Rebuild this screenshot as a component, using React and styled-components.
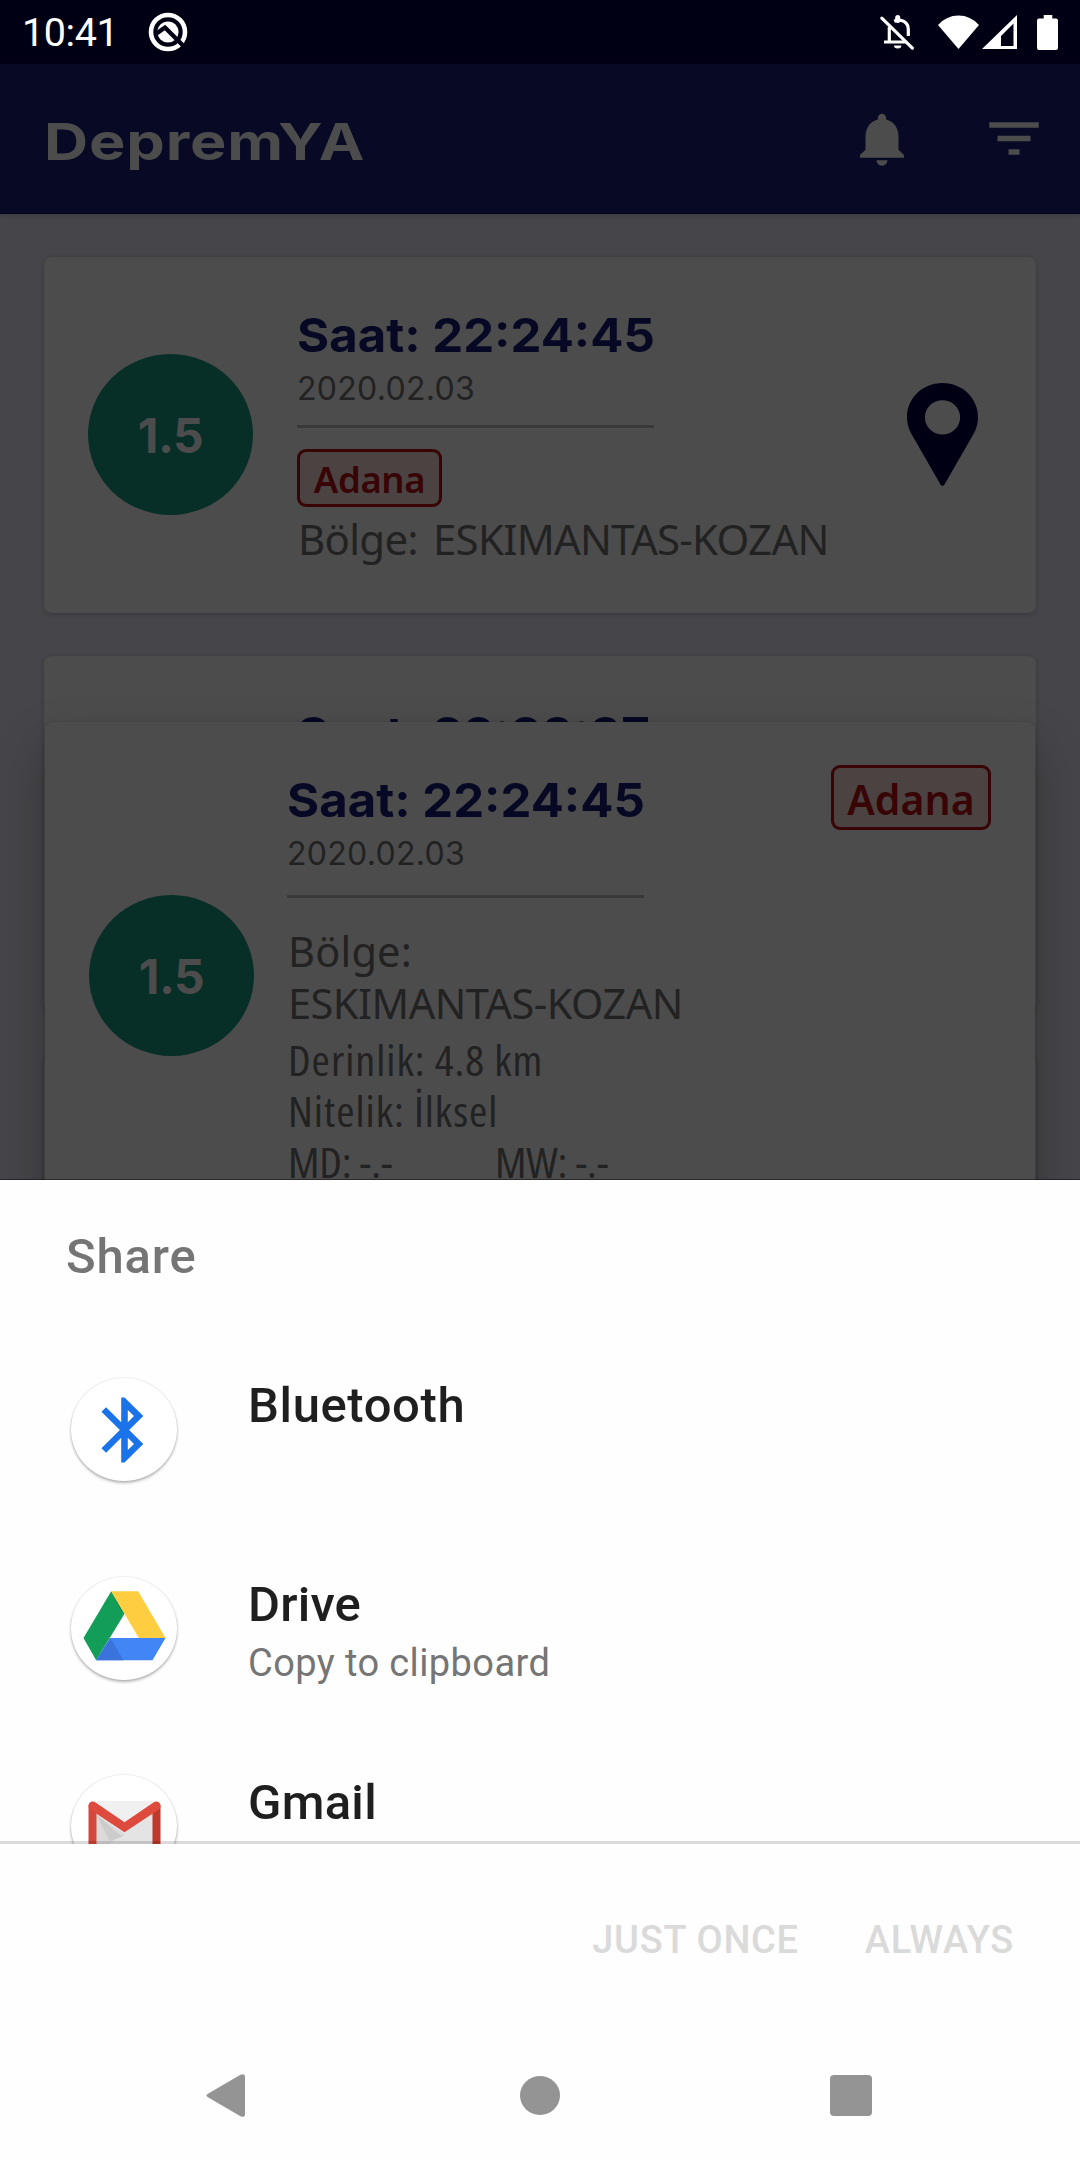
import React from 'react';
import styled, { createGlobalStyle } from 'styled-components';

const GlobalStyle = createGlobalStyle`
  * { box-sizing: border-box; }
  body { margin: 0; background: #fff; }
`;

const geometric = '"Inter", "Liberation Sans", sans-serif';
const humanist = '"Noto Sans", "Open Sans", sans-serif';

const Screen = styled.div`
  position: relative;
  display: flex;
  flex-direction: column;
  width: 1080px;
  height: 2160px;
  overflow: hidden;
  background: #464549;
  font-family: Roboto, sans-serif;
  svg { display: block; flex: none; }
`;

const StatusBar = styled.header`
  display: flex;
  align-items: center;
  flex: none;
  height: 64px;
  padding: 0 22px 0 22px;
  background: #000014;
  color: #fff;
`;

const Clock = styled.span`
  width: 126px;
  padding-top: 2px;
  font-size: 39.5px;
  line-height: 50px;
  letter-spacing: -0.4px;
`;

const StatusIcons = styled.div`
  display: flex;
  align-items: center;
  margin-left: auto;
`;

const Gap = styled.span`
  width: ${(p) => p.$w}px;
`;

const AppBar = styled.div`
  display: flex;
  align-items: center;
  flex: none;
  height: 150px;
  padding: 0 33px 0 44px;
  background: #080924;
  border-bottom: 1px solid #00001c;
  box-shadow: 0 2px 5px rgba(0, 0, 0, 0.15);
  color: #4c4c4c;
`;

const AppTitle = styled.h1`
  margin: 6px 0 0;
  font: 700 51px/64px ${geometric};
  letter-spacing: 0.7px;
  transform: scaleX(1.2);
  transform-origin: left;
`;

const AppActions = styled.div`
  display: flex;
  align-items: center;
  gap: 66px;
  margin-left: auto;
`;

const List = styled.main`
  display: flex;
  flex-direction: column;
  gap: 43px;
  padding: 43px 44px 0;
`;

const Card = styled.article`
  display: flex;
  align-items: center;
  flex: none;
  height: 356px;
  padding: 0 58px 2px 44px;
  border-radius: 8px;
  background: #4c4c4c;
  box-shadow: 0 1px 5px rgba(0, 0, 0, 0.22);
`;

const Magnitude = styled.div`
  display: flex;
  align-items: center;
  justify-content: center;
  flex: none;
  width: 165px;
  height: 161px;
  padding-top: 3px;
  border-radius: 50%;
  background: #082f27;
  color: #4c4c4c;
  font: 700 48px/56px ${geometric};
  letter-spacing: -0.6px;
`;

const Info = styled.div`
  display: flex;
  flex-direction: column;
  align-items: flex-start;
  align-self: flex-start;
  margin-left: ${(p) => p.$left}px;
  padding-top: 50px;
`;

const Time = styled.div`
  font: 700 47px/56px ${geometric};
  color: #070823;
  white-space: nowrap;
  transform: scaleX(1.045);
  transform-origin: left;
`;

const DateLine = styled.div`
  padding-top: 1px;
  font: 400 32px/50px ${geometric};
  letter-spacing: 0.3px;
  color: #222;
`;

const Divider = styled.div`
  width: 357px;
  height: 3px;
  margin: ${(p) => p.$before}px 0 ${(p) => p.$after}px;
  background: #393939;
`;

const Chip = styled.span`
  display: flex;
  align-items: center;
  justify-content: center;
  width: ${(p) => (p.$large ? 160 : 145)}px;
  height: ${(p) => (p.$large ? 65 : 58)}px;
  padding-top: 2px;
  border: 3px solid #380405;
  border-radius: 9px;
  background: #4a4341;
  color: #380405;
  font: 600 ${(p) => (p.$large ? 41 : 36.5)}px/50px ${humanist};
  letter-spacing: ${(p) => (p.$large ? 0 : -0.4)}px;
`;

const Region = styled.div`
  margin-top: ${(p) => p.$top || 0}px;
  padding-left: 1px;
  font: 400 ${(p) => p.$size}px/${(p) => p.$line}px ${humanist};
  letter-spacing: ${(p) => p.$spacing}px;
  word-spacing: 5px;
  color: #222;
  white-space: nowrap;
`;

const Details = styled.div`
  margin: 6px 0 0 1px;
  transform: scaleX(1.08);
  transform-origin: left;
`;

const Detail = styled.div`
  display: flex;
  height: 51px;
  font: 400 41px/51px "Open Sans", sans-serif;
  font-stretch: 75%;
  letter-spacing: 0.9px;
  color: #222;
  white-space: nowrap;
`;

const DetailCell = styled.span`
  width: 191.7px;
  letter-spacing: -0.2px;
`;

const PinSlot = styled.div`
  margin-left: auto;
`;

const Modal = styled.section`
  position: absolute;
  left: 45px;
  top: 722px;
  display: flex;
  align-items: center;
  width: 990px;
  height: 507px;
  padding: 0 44px;
  border-radius: 8px;
  background: #4c4c4c;
  box-shadow: 0 0 3px rgba(0, 0, 0, 0.15), 0 24px 48px rgba(0, 0, 0, 0.26);
`;

const ChipCorner = styled.div`
  align-self: flex-start;
  margin: 43px 0 0 auto;
`;

const Sheet = styled.section`
  position: absolute;
  left: 0;
  top: 1180px;
  display: flex;
  flex-direction: column;
  width: 1080px;
  height: 980px;
  background: #fefefe;
  box-shadow: 0 -1px 0 rgba(0, 0, 0, 0.45);
`;

const SheetTitle = styled.h2`
  flex: none;
  height: 150px;
  margin: 0;
  padding: 47px 0 0 66px;
  font: 500 49px/60px Roboto, sans-serif;
  letter-spacing: 0.8px;
  color: #757575;
`;

const Targets = styled.div`
  flex: none;
  height: 514px;
  overflow: hidden;
`;

const Target = styled.div`
  display: flex;
  height: 198.5px;
  padding: 48px 0 0 71px;
`;

const AppIcon = styled.div`
  display: flex;
  align-items: center;
  justify-content: center;
  flex: none;
  width: 106px;
  height: 103px;
  border-radius: 50%;
  background: #fff;
  box-shadow: 0 0 1px 1px rgba(0, 0, 0, 0.05), 0 2px 3px rgba(0, 0, 0, 0.28);
`;

const TargetText = styled.div`
  margin: -2px 0 0 71px;
`;

const TargetName = styled.div`
  font: 500 49px/60px Roboto, sans-serif;
  letter-spacing: ${(p) => p.$spacing}px;
  color: #1f1f1f;
`;

const TargetNote = styled.div`
  margin-top: 4px;
  font: 400 38px/48px Roboto, sans-serif;
  letter-spacing: 0.4px;
  color: #757575;
`;

const Buttons = styled.div`
  display: flex;
  justify-content: flex-end;
  gap: 66px;
  flex: none;
  height: 184px;
  margin-top: -3px;
  padding: 71px 66px 0 0;
  border-top: 3px solid rgba(0, 0, 0, 0.14);
`;

const TextButton = styled.button`
  height: 50px;
  padding: 0;
  border: 0;
  background: none;
  font: 500 38px/50px Roboto, sans-serif;
  letter-spacing: 0.7px;
  color: #dadada;
`;

const NavBar = styled.nav`
  display: flex;
  justify-content: space-between;
  align-items: center;
  flex: none;
  height: 136px;
  padding: 4px 208px 0 206px;
`;

const HomeButton = styled.div`
  padding-left: 5px;
`;

function QIcon() {
  return (
    <svg width="40" height="40" viewBox="0 0 40 40" fill="none">
      <circle cx="20" cy="20" r="17" stroke="#fff" strokeWidth="4.6" />
      <circle cx="20" cy="20" r="10.6" fill="#fff" />
      <path d="M8.500 21.500l8.500-6L36 34.500" stroke="#000014" strokeWidth="4.4" />
    </svg>
  );
}

function MutedIcon() {
  return (
    <svg width="40" height="38" viewBox="0 0 40 38" fill="none" stroke="#fff" strokeWidth="3.2">
      <path d="M17.200 8.200c7-3.200 14.100 1 14.100 8V23" />
      <path d="M20.700 4.500v3" strokeWidth="5" strokeLinecap="round" />
      <path d="M6.500 3l31 30.200" stroke="#000014" strokeWidth="4" />
      <path d="M4.800 5.200l30.600 29.900" strokeLinecap="round" />
      <path d="M17 32.600h7.400a3.700 3 0 0 1-7.400 0z" fill="#fff" stroke="none" />
      <path d="M12.300 14v15M7 29h22" />
    </svg>
  );
}

function WifiIcon() {
  return (
    <svg width="41" height="34" viewBox="0 0 41 34">
      <path d="M20.500 34L0 10Q8.500 0.500 20.500 0.500T41 10z" fill="#fff" />
    </svg>
  );
}

function SignalIcon() {
  return (
    <svg width="35" height="34" viewBox="0 0 35 34">
      <path fillRule="evenodd" d="M0 34L35 0v34zM19 21v10h12.500V8.500z" fill="#fff" />
    </svg>
  );
}

function BatteryIcon() {
  return (
    <svg width="21" height="35" viewBox="0 0 21 35">
      <path d="M6.700 0h8.600v3.500H19a2 2 0 0 1 2 2V33a2 2 0 0 1-2 2H2a2 2 0 0 1-2-2V5.500a2 2 0 0 1 2-2h4.700z" fill="#fff" />
    </svg>
  );
}

function BellIcon() {
  return (
    <svg width="66" height="64" viewBox="0 0 24 24" preserveAspectRatio="none" fill="currentColor">
      <path d="M12 22c1.100 0 2-.9 2-2h-4c0 1.100.89 2 2 2zm6-6v-5c0-3.070-1.640-5.640-4.500-6.320V4c0-.83-.67-1.500-1.500-1.500s-1.500.67-1.500 1.500v.68C7.630 5.360 6 7.920 6 11v5l-2 2v1h16v-1l-2-2z" />
    </svg>
  );
}

function FilterIcon() {
  return (
    <svg width="66" height="65" viewBox="0 0 24 24" preserveAspectRatio="none" fill="currentColor">
      <path d="M10 18h4v-2h-4v2zM3 6v2h18V6H3zm3 7h12v-2H6v2z" />
    </svg>
  );
}

function PinIcon() {
  return (
    <svg width="71" height="103" viewBox="0 0 71 103">
      <path
        fillRule="evenodd"
        d="M35.500 0C55.500 0 71 15.300 71 34.300c0 6.200-1.500 11.200-4.200 16.200L37.500 101.500c-1 1.800-3 1.800-4 0L4.200 50.500C1.500 45.500 0 40.500 0 34.300 0 15.300 15.500 0 35.500 0zm0 17.200a17.600 17.200 0 1 0 0 34.400a17.600 17.200 0 1 0 0-34.400z"
        fill="#000014"
      />
    </svg>
  );
}

function BluetoothIcon() {
  return (
    <svg width="79" height="78" viewBox="0 0 24 24" preserveAspectRatio="none" fill="#1a73e8">
      <path d="M17.710 7.710L12 2h-1v7.590L6.410 5 5 6.410 10.590 12 5 17.590 6.410 19 11 14.410V22h1l5.710-5.710-4.300-4.290 4.300-4.290zM13 5.830l1.880 1.880L13 9.590V5.830zm1.880 10.460L13 18.170v-3.760l1.880 1.880z" />
    </svg>
  );
}

function DriveIcon() {
  return (
    <svg width="107" height="104" viewBox="32 47 320 312">
      <path d="M152 93l40 67-85 140-38-67z" fill="#129d59" />
      <path d="M152 93l40 67-10-9z" fill="#0b6e3e" opacity=".5" />
      <path d="M152 93h81l82 140h-80z" fill="#ffcd40" />
      <path d="M149 233h166l-39 67H107z" fill="#4285f4" />
      <path d="M149 233l40 67h-82z" fill="#3a73dc" />
    </svg>
  );
}

function GmailIcon() {
  return (
    <svg width="107" height="104" viewBox="32 643 320 312">
      <path d="M94 722h196v156H94z" fill="#e4e4e4" />
      <path d="M94 722h196l-98 68z" fill="#f0f0f0" />
      <path d="M108 762l84 62-44 18z" fill="#d2d2d2" />
      <path d="M108 762l80 58-48 34-32 20z" fill="#dadada" />
      <path d="M108 762l76 66-36 14z" fill="#cccccc" />
      <path d="M84 734h24v144H94a10 10 0 0 1-10-10z" fill="#d5473a" />
      <path d="M276 734h24v134a10 10 0 0 1-10 10h-14z" fill="#c0392b" />
      <path d="M84 735c0-10 10-16 20-10l88 60 88-60c10-6 20 0 20 10 0 5-2 9-6 12l-102 68-102-68c-4-3-6-7-6-12z" fill="#de4a3d" />
    </svg>
  );
}

function BackIcon() {
  return (
    <svg width="39" height="43" viewBox="0 0 39 43">
      <path d="M1.500 20L34.500.7Q39-1 39 3v37q0 4-4.500 2.300L1.500 23q-2-1.500 0-3z" fill="#949494" />
    </svg>
  );
}

function HomeIcon() {
  return (
    <svg width="40" height="39" viewBox="0 0 40 39">
      <ellipse cx="20" cy="19.500" rx="20" ry="19.500" fill="#949494" />
    </svg>
  );
}

function RecentsIcon() {
  return (
    <svg width="42" height="41" viewBox="0 0 42 41">
      <rect width="42" height="41" rx="4" fill="#949494" />
    </svg>
  );
}

function QuakeCard({ time, date, city, region, magnitude }) {
  return (
    <Card>
      <Magnitude>{magnitude}</Magnitude>
      <Info $left={44}>
        <Time>Saat: {time}</Time>
        <DateLine>{date}</DateLine>
        <Divider $before={11} $after={21} />
        <Chip>{city}</Chip>
        <Region $size={42} $line={56} $spacing={-0.75} $top={4}>Bölge: {region}</Region>
      </Info>
      <PinSlot><PinIcon /></PinSlot>
    </Card>
  );
}

const targets = [
  { name: 'Bluetooth', spacing: 0.6, icon: <BluetoothIcon /> },
  { name: 'Drive', spacing: 0.2, note: 'Copy to clipboard', icon: <DriveIcon /> },
  { name: 'Gmail', spacing: 0.3, icon: <GmailIcon /> },
];

export default function App() {
  return (
    <Screen>
      <GlobalStyle />
      <StatusBar>
        <Clock>10:41</Clock>
        <QIcon />
        <StatusIcons>
          <MutedIcon />
          <Gap $w={21} />
          <WifiIcon />
          <Gap $w={3} />
          <SignalIcon />
          <Gap $w={20} />
          <BatteryIcon />
        </StatusIcons>
      </StatusBar>
      <AppBar>
        <AppTitle>DepremYA</AppTitle>
        <AppActions>
          <BellIcon />
          <FilterIcon />
        </AppActions>
      </AppBar>
      <List>
        <QuakeCard
          time="22:24:45"
          date="2020.02.03"
          city="Adana"
          region="ESKIMANTAS-KOZAN"
          magnitude="1.5"
        />
        <Card>
          <Info $left={209}>
            <Time>Saat: 22:23:37</Time>
          </Info>
        </Card>
        <Card />
      </List>
      <Modal>
        <Magnitude>1.5</Magnitude>
        <Info $left={33}>
          <Time>Saat: 22:24:45</Time>
          <DateLine>2020.02.03</DateLine>
          <Divider $before={16} $after={27} />
          <Region $size={41.5} $line={52} $spacing={0.2}>Bölge:</Region>
          <Region $size={41.5} $line={52} $spacing={-0.5}>ESKIMANTAS-KOZAN</Region>
          <Details>
            <Detail>Derinlik: 4.8 km</Detail>
            <Detail>Nitelik: İlksel</Detail>
            <Detail>
              <DetailCell>MD: -.-</DetailCell>
              <DetailCell>MW: -.-</DetailCell>
            </Detail>
          </Details>
        </Info>
        <ChipCorner><Chip $large>Adana</Chip></ChipCorner>
      </Modal>
      <Sheet>
        <SheetTitle>Share</SheetTitle>
        <Targets>
          {targets.map((t) => (
            <Target key={t.name}>
              <AppIcon>{t.icon}</AppIcon>
              <TargetText>
                <TargetName $spacing={t.spacing}>{t.name}</TargetName>
                {t.note && <TargetNote>{t.note}</TargetNote>}
              </TargetText>
            </Target>
          ))}
        </Targets>
        <Buttons>
          <TextButton>JUST ONCE</TextButton>
          <TextButton>ALWAYS</TextButton>
        </Buttons>
        <NavBar>
          <BackIcon />
          <HomeButton><HomeIcon /></HomeButton>
          <RecentsIcon />
        </NavBar>
      </Sheet>
    </Screen>
  );
}
